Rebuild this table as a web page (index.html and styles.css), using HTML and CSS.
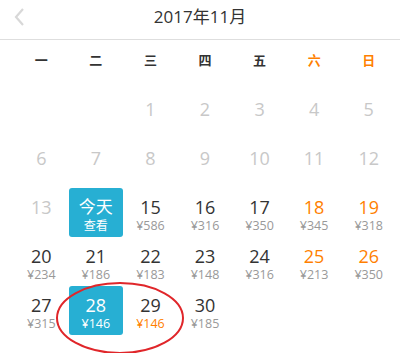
FILE: index.html
```html
<!DOCTYPE html>
<html lang="zh">
<head>
<meta charset="utf-8">
<link rel="stylesheet" href="styles.css">
</head>
<body>
<div class="cal">
  <header class="bar">
    <span class="back"><svg width="12" height="20" viewBox="0 0 12 20"><path d="M10 2 L3 10 L10 18" fill="none" stroke="#d8d8d8" stroke-width="2.2"/></svg></span>
    <h1 class="title">2017年11月</h1>
  </header>
  <div class="week">
    <span>一</span><span>二</span><span>三</span><span>四</span><span>五</span><span class="we">六</span><span class="we">日</span>
  </div>
  <div class="grid">
    <div class="cell"></div>
    <div class="cell"></div>
    <div class="cell past"><span class="d">1</span></div>
    <div class="cell past"><span class="d">2</span></div>
    <div class="cell past"><span class="d">3</span></div>
    <div class="cell past"><span class="d">4</span></div>
    <div class="cell past"><span class="d">5</span></div>

    <div class="cell past"><span class="d">6</span></div>
    <div class="cell past"><span class="d">7</span></div>
    <div class="cell past"><span class="d">8</span></div>
    <div class="cell past"><span class="d">9</span></div>
    <div class="cell past"><span class="d">10</span></div>
    <div class="cell past"><span class="d">11</span></div>
    <div class="cell past"><span class="d">12</span></div>

    <div class="cell past"><span class="d">13</span></div>
    <div class="cell sel today"><span class="d">今天</span><span class="p">查看</span></div>
    <div class="cell"><span class="d">15</span><span class="p">¥586</span></div>
    <div class="cell"><span class="d">16</span><span class="p">¥316</span></div>
    <div class="cell"><span class="d">17</span><span class="p">¥350</span></div>
    <div class="cell we"><span class="d">18</span><span class="p">¥345</span></div>
    <div class="cell we"><span class="d">19</span><span class="p">¥318</span></div>

    <div class="cell"><span class="d">20</span><span class="p">¥234</span></div>
    <div class="cell"><span class="d">21</span><span class="p">¥186</span></div>
    <div class="cell"><span class="d">22</span><span class="p">¥183</span></div>
    <div class="cell"><span class="d">23</span><span class="p">¥148</span></div>
    <div class="cell"><span class="d">24</span><span class="p">¥316</span></div>
    <div class="cell we"><span class="d">25</span><span class="p">¥213</span></div>
    <div class="cell we"><span class="d">26</span><span class="p">¥350</span></div>

    <div class="cell"><span class="d">27</span><span class="p">¥315</span></div>
    <div class="cell sel"><span class="d">28</span><span class="p">¥146</span></div>
    <div class="cell"><span class="d">29</span><span class="p low">¥146</span></div>
    <div class="cell"><span class="d">30</span><span class="p">¥185</span></div>
  </div>
  <svg class="mark" width="140" height="80" viewBox="0 0 140 80"><ellipse cx="70" cy="38" rx="63" ry="35" fill="none" stroke="#e0262a" stroke-width="2"/></svg>
</div>
</body>
</html>
```
FILE: styles.css
```css
* { box-sizing: border-box; margin: 0; padding: 0; }
body {
  width: 400px;
  height: 353px;
  overflow: hidden;
  background: #fff;
  font-family: "Open Sans", "Noto Sans CJK SC", sans-serif;
  color: #333;
}
.cal { position: relative; width: 400px; }
.bar {
  height: 40px;
  border-bottom: 1px solid #dedede;
  display: flex;
  align-items: center;
  justify-content: center;
  position: relative;
}
.back { position: absolute; left: 13px; top: 7px; display: flex; }
.title {
  font-size: 17px;
  font-weight: normal;
  color: #333;
  line-height: 22px;
  margin-top: -6px;
}
.week {
  display: grid;
  grid-template-columns: repeat(7, 1fr);
  padding: 0 4px 0 14px;
  height: 38px;
  align-items: center;
  font-size: 13px;
  font-weight: bold;
  color: #333;
  text-align: center;
}
.week .we { color: #ff7f00; }
.grid {
  display: grid;
  grid-template-columns: repeat(7, 1fr);
  grid-auto-rows: 49px;
  padding: 0 4px 0 14px;
  margin-top: 12px;
}
.cell {
  display: flex;
  flex-direction: column;
  align-items: center;
  padding-top: 8px;
  border-radius: 3px;
}
.d { font-size: 18px; line-height: 22px; color: #333; }
.p { font-size: 12.5px; line-height: 14px; color: #999; margin-top: 1px; }
.past .d { color: #c8c8c8; }
.we .d { color: #ff7f00; }
.p.low { color: #ff7f00; }
.sel { background: #27afd3; }
.sel .d, .sel .p { color: #fff; }
.today .d { font-size: 17px; line-height: 20px; margin-top: 1px; }
.today .p { font-size: 12px; margin-top: 2px; }
.mark { position: absolute; left: 50px; top: 280px; }
```
